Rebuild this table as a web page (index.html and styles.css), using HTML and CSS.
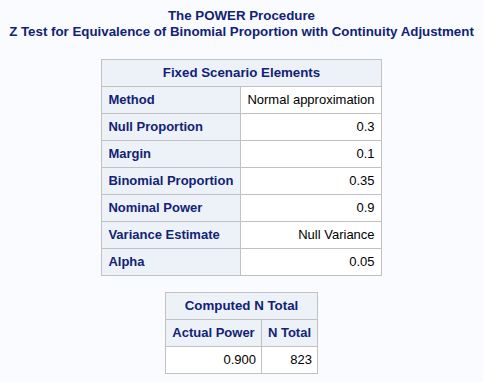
FILE: index.html
```html
<!DOCTYPE html>
<html>
<head>
<meta charset="utf-8">
<link rel="stylesheet" href="styles.css">
</head>
<body>
<div class="titles">
  <div class="title">The POWER Procedure</div>
  <div class="title">Z Test for Equivalence of Binomial Proportion with Continuity Adjustment</div>
</div>
<table class="tbl fixed">
  <thead>
    <tr><th class="head" colspan="2">Fixed Scenario Elements</th></tr>
  </thead>
  <tbody>
    <tr><th class="rowh c1">Method</th><td class="data c2">Normal approximation</td></tr>
    <tr><th class="rowh c1">Null Proportion</th><td class="data c2">0.3</td></tr>
    <tr><th class="rowh c1">Margin</th><td class="data c2">0.1</td></tr>
    <tr><th class="rowh c1">Binomial Proportion</th><td class="data c2">0.35</td></tr>
    <tr><th class="rowh c1">Nominal Power</th><td class="data c2">0.9</td></tr>
    <tr><th class="rowh c1">Variance Estimate</th><td class="data c2">Null Variance</td></tr>
    <tr><th class="rowh c1">Alpha</th><td class="data c2">0.05</td></tr>
  </tbody>
</table>
<table class="tbl computed">
  <thead>
    <tr><th class="head" colspan="2">Computed N Total</th></tr>
    <tr><th class="head colh d1">Actual Power</th><th class="head colh d2">N Total</th></tr>
  </thead>
  <tbody>
    <tr><td class="data d1">0.900</td><td class="data d2">823</td></tr>
  </tbody>
</table>
</body>
</html>
```

FILE: styles.css
```css
html, body {
  margin: 0;
  padding: 0;
  background: #fafbfe;
}
body {
  padding-top: 8px;
  font-family: "Liberation Sans", Arial, sans-serif;
  font-size: 13px;
  display: flex;
  flex-direction: column;
  align-items: center;
}
.titles {
  text-align: center;
}
.title {
  font-weight: bold;
  color: #112277;
  line-height: 16px;
  font-size: 13.3px;
}
.tbl {
  border-collapse: separate;
  border-spacing: 0;
  border-top: 1px solid #c1c1c1;
  border-left: 1px solid #c1c1c1;
}
.tbl th, .tbl td {
  border-right: 1px solid #c1c1c1;
  border-bottom: 1px solid #c1c1c1;
  padding: 5px 6px;
  line-height: 16px;
  font-size: 13px;
  white-space: nowrap;
}
.fixed {
  margin-top: 19px;
}
.computed {
  margin-top: 16px;
}
.tbl .head {
  background: #edf2f9;
  color: #112277;
  font-weight: bold;
  text-align: center;
  font-size: 13.3px;
}
.tbl .colh {
  font-size: 13px;
}
.rowh {
  background: #edf2f9;
  color: #112277;
  font-weight: bold;
  text-align: left;
}
.data {
  background: #ffffff;
  color: #000000;
  text-align: right;
}
.c1 { width: 126px; }
.c2 { width: 124px; }
.tbl .d1 { width: 85px; padding-left: 5px; padding-right: 5px; }
.tbl .d2 { width: 45px; padding-left: 5px; padding-right: 5px; }
```
